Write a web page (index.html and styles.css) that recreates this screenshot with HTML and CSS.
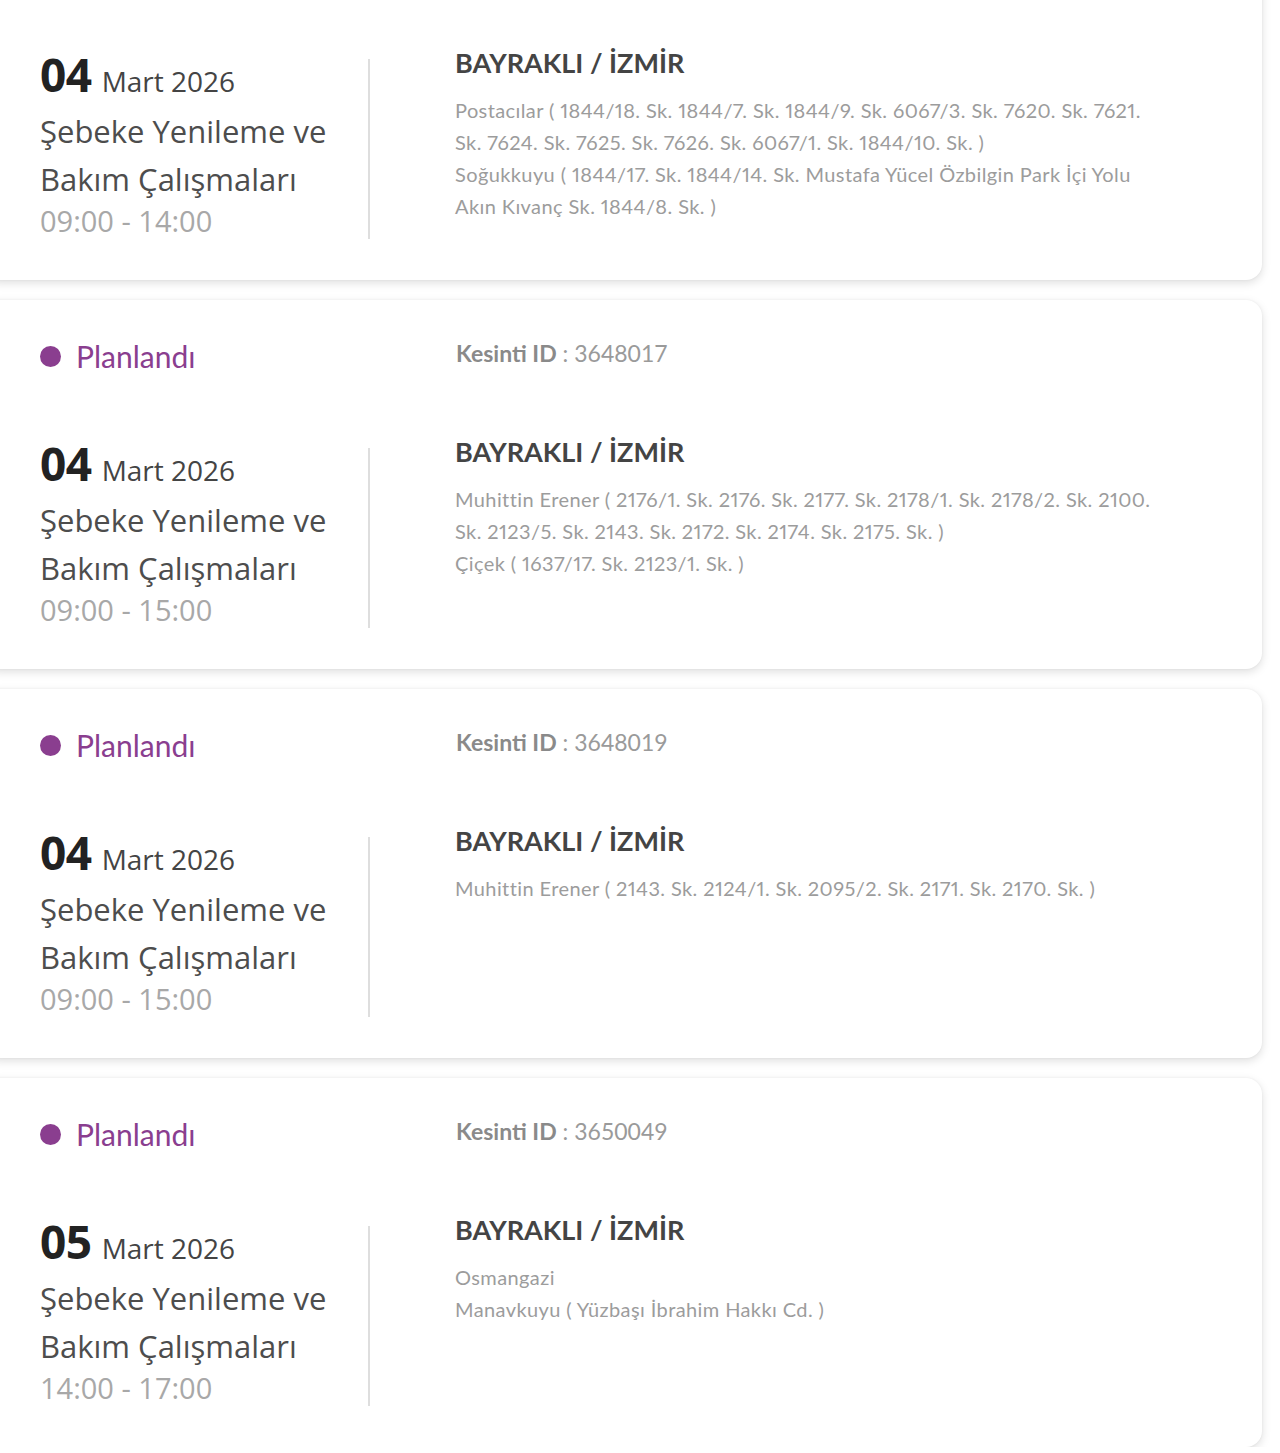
FILE: index.html
```html
<!DOCTYPE html>
<html lang="tr">
<head>
<meta charset="utf-8">
<title>Planlı Kesintiler</title>
<link rel="stylesheet" href="styles.css">
</head>
<body>
<div class="list">
  <div class="card">
    <div class="card-top card-top--hidden"></div>
    <div class="card-body">
      <div class="when">
        <div class="date"><span class="day">04</span><span class="month">Mart 2026</span></div>
        <div class="title">Şebeke Yenileme ve Bakım Çalışmaları</div>
        <div class="time">09:00 - 14:00</div>
      </div>
      <div class="where">
        <div class="city">BAYRAKLI / İZMİR</div>
        <div class="streets">
          <p>Postacılar ( 1844/18. Sk. 1844/7. Sk. 1844/9. Sk. 6067/3. Sk. 7620. Sk. 7621. Sk. 7624. Sk. 7625. Sk. 7626. Sk. 6067/1. Sk. 1844/10. Sk. )</p>
          <p>Soğukkuyu ( 1844/17. Sk. 1844/14. Sk. Mustafa Yücel Özbilgin Park İçi Yolu Akın Kıvanç Sk. 1844/8. Sk. )</p>
        </div>
      </div>
    </div>
  </div>

  <div class="card">
    <div class="card-top">
      <div class="status"><span class="dot"></span>Planlandı</div>
      <div class="outage-id"><b>Kesinti ID</b> : 3648017</div>
    </div>
    <div class="card-body">
      <div class="when">
        <div class="date"><span class="day">04</span><span class="month">Mart 2026</span></div>
        <div class="title">Şebeke Yenileme ve Bakım Çalışmaları</div>
        <div class="time">09:00 - 15:00</div>
      </div>
      <div class="where">
        <div class="city">BAYRAKLI / İZMİR</div>
        <div class="streets">
          <p>Muhittin Erener ( 2176/1. Sk. 2176. Sk. 2177. Sk. 2178/1. Sk. 2178/2. Sk. 2100. Sk. 2123/5. Sk. 2143. Sk. 2172. Sk. 2174. Sk. 2175. Sk. )</p>
          <p>Çiçek ( 1637/17. Sk. 2123/1. Sk. )</p>
        </div>
      </div>
    </div>
  </div>

  <div class="card">
    <div class="card-top">
      <div class="status"><span class="dot"></span>Planlandı</div>
      <div class="outage-id"><b>Kesinti ID</b> : 3648019</div>
    </div>
    <div class="card-body">
      <div class="when">
        <div class="date"><span class="day">04</span><span class="month">Mart 2026</span></div>
        <div class="title">Şebeke Yenileme ve Bakım Çalışmaları</div>
        <div class="time">09:00 - 15:00</div>
      </div>
      <div class="where">
        <div class="city">BAYRAKLI / İZMİR</div>
        <div class="streets">
          <p>Muhittin Erener ( 2143. Sk. 2124/1. Sk. 2095/2. Sk. 2171. Sk. 2170. Sk. )</p>
        </div>
      </div>
    </div>
  </div>

  <div class="card">
    <div class="card-top">
      <div class="status"><span class="dot"></span>Planlandı</div>
      <div class="outage-id"><b>Kesinti ID</b> : 3650049</div>
    </div>
    <div class="card-body">
      <div class="when">
        <div class="date"><span class="day">05</span><span class="month">Mart 2026</span></div>
        <div class="title">Şebeke Yenileme ve Bakım Çalışmaları</div>
        <div class="time">14:00 - 17:00</div>
      </div>
      <div class="where">
        <div class="city">BAYRAKLI / İZMİR</div>
        <div class="streets">
          <p>Osmangazi</p>
          <p>Manavkuyu ( Yüzbaşı İbrahim Hakkı Cd. )</p>
        </div>
      </div>
    </div>
  </div>
</div>
</body>
</html>
```

FILE: styles.css
```css
* { box-sizing: border-box; }

html, body {
  margin: 0;
  padding: 0;
  background: #ffffff;
}

body {
  font-family: "Open Sans", "Noto Sans", sans-serif;
  overflow: hidden;
}

.list {
  display: flex;
  flex-direction: column;
  gap: 20px;
  width: 1278px;
  margin-top: -89px;
  margin-left: -16px;
}

.card {
  height: 369px;
  background: #fff;
  border-radius: 16px;
  box-shadow: 0 3px 10px rgba(0, 0, 0, 0.13), 0 0 3px rgba(0, 0, 0, 0.05);
  padding: 36px 40px 0 56px;
  display: flex;
  flex-direction: column;
  gap: 60px;
}

.card-top {
  height: 40px;
  display: grid;
  grid-template-columns: 416px 1fr;
  align-items: center;
}

.status {
  display: flex;
  align-items: center;
  gap: 15px;
  font-family: "Lato", sans-serif;
  font-size: 30px;
  color: #8a3e8f;
}

.dot {
  width: 21px;
  height: 21px;
  border-radius: 50%;
  background: #8a3e8f;
}

.outage-id {
  font-family: "Lato", sans-serif;
  font-size: 23px;
  color: #9a9a9a;
  margin-top: -6px;
}

.outage-id b {
  color: #8a8a8a;
  font-weight: 700;
}

.card-body {
  display: grid;
  grid-template-columns: 330px 1fr;
  align-items: start;
}

.when {
  margin-top: 12px;
  border-right: 2px solid #dedede;
  height: 180px;
}

.date {
  height: 48px;
  line-height: 30px;
  color: #222;
  white-space: nowrap;
}

.day {
  font-family: "Noto Sans", sans-serif;
  font-weight: 700;
  font-size: 46px;
  letter-spacing: -0.5px;
  margin-right: 10px;
}

.month {
  font-size: 28px;
  color: #444;
}

.title {
  font-size: 31px;
  line-height: 48px;
  color: #4d4d4d;
  width: 320px;
}

.time {
  font-size: 29px;
  line-height: 36px;
  color: #a8a8a8;
}

.where {
  padding-left: 85px;
}

.city {
  font-family: "Lato", sans-serif;
  font-weight: 700;
  font-size: 27px;
  line-height: 32px;
  color: #444;
  margin-bottom: 15px;
}

.streets p {
  margin: 0;
  font-family: "Lato", sans-serif;
  font-size: 20px;
  line-height: 32px;
  color: #9c9c9c;
  font-variant-numeric: proportional-nums;
  letter-spacing: 0.4px;
  max-width: 702px;
}
```
